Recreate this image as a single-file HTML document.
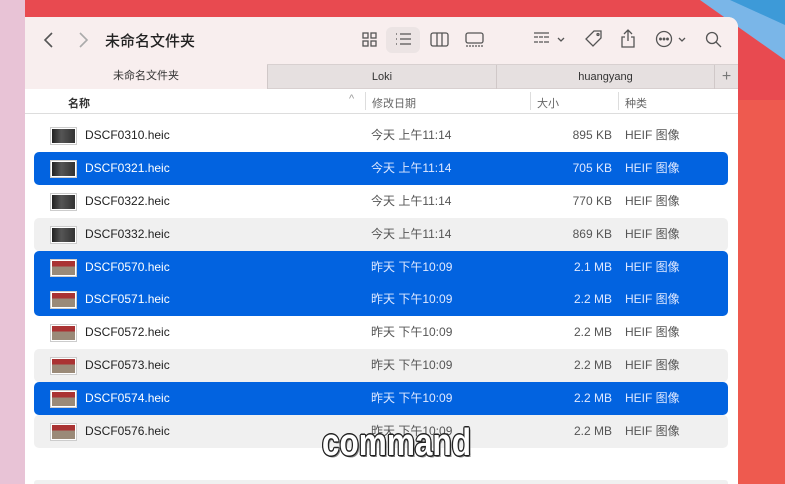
<!DOCTYPE html>
<html><head><meta charset="utf-8"><style>
*{margin:0;padding:0;box-sizing:border-box}
html,body{width:785px;height:484px;overflow:hidden}
body{position:relative;background:#e84a50;font-family:"Liberation Sans","Noto Sans CJK SC",sans-serif;}
.abs{position:absolute}
.win{left:25px;top:17px;width:713px;height:467px;background:#fff;border-top-right-radius:10px;overflow:hidden}
.tb{left:0;top:0;width:713px;height:47px;background:#f8eeee}
.tabs{left:0;top:47px;width:713px;height:25px;background:#e6e0e0;border-top:1px solid #d8d0d0;border-bottom:1px solid #d8d0d0}
.tab{position:absolute;top:0;height:24px;font-size:11px;color:#333;text-align:center;line-height:24px}
.ch{left:0;top:72px;width:713px;height:25px;background:#fff;border-bottom:1px solid #ddd;font-size:11px;color:#666}
.row{position:absolute;left:9px;width:694px;height:33px;font-size:12px;color:#222;line-height:33px}
.g{background:#f0f0f0;border-radius:5px}
.s{background:#0263e0;color:#fff;border-radius:5px}
.s .d,.s .z,.s .k{color:#dfe8ff}
.row span{position:absolute}
.n{left:51px}
.d{left:337px;color:#555}
.z{right:116px;color:#555}
.k{left:591px;color:#555}
.th{position:absolute;left:16px;top:8px;width:27px;height:18px;border:1px solid #ccc;background:#fff;padding:1px}
.th i{display:block;width:100%;height:100%;background:linear-gradient(#a33 0 40%,#9a8a78 40%)}
.dk i{background:linear-gradient(90deg,#222,#555 40%,#333)}
.ico{position:absolute;stroke:#555;fill:none;stroke-width:1.3}
</style></head><body>
<div class="abs" style="left:0;top:0;width:25px;height:484px;background:#e8c3d6"></div>
<svg class="abs" style="left:690px;top:0" width="95" height="484"><polygon points="10,0 95,0 95,60" fill="#7ab6e8"/><polygon points="40,0 95,0 95,25" fill="#3d9ad8"/><rect x="48" y="100" width="47" height="384" fill="#ee5a4f"/></svg>
<div class="abs win">
 <div class="abs tb">
  <svg class="ico" style="left:18px;top:14px" width="12" height="18"><path d="M9 2 L2 9 L9 16" stroke-width="1.6"/></svg>
  <svg class="ico" style="left:52px;top:14px" width="12" height="18"><path d="M3 2 L10 9 L3 16" stroke="#aaa" stroke-width="1.6"/></svg>
  <div class="abs" style="left:80px;top:13px;font-size:15px;color:#222;font-weight:500">未命名文件夹</div>
  <svg class="ico" style="left:337px;top:15px" width="16" height="16"><rect x="1" y="1" width="5" height="5"/><rect x="9" y="1" width="5" height="5"/><rect x="1" y="9" width="5" height="5"/><rect x="9" y="9" width="5" height="5"/></svg>
  <div class="abs" style="left:361px;top:10px;width:34px;height:26px;background:#ece4e4;border-radius:6px"></div>
  <svg class="ico" style="left:370px;top:15px" width="18" height="14"><path d="M1 2h1M5 2h11M1 7h1M5 7h11M1 12h1M5 12h11"/></svg>
  <svg class="ico" style="left:405px;top:15px" width="20" height="16"><rect x="1" y="1" width="17" height="13" rx="2"/><path d="M7 1v13M12 1v13"/></svg>
  <svg class="ico" style="left:440px;top:15px" width="20" height="16"><rect x="1" y="1" width="17" height="10" rx="2"/><path d="M1 14h17" stroke-dasharray="2 1"/></svg>
  <svg class="ico" style="left:508px;top:14px" width="32" height="16"><path d="M1 2h15M1 6h4M6 6h4M11 6h5M1 11h4M6 11h4M11 11h5" /><path d="M25 7l3 3 3-3"/></svg>
  <svg class="ico" style="left:559px;top:12px" width="20" height="20"><path d="M10 2h7v7l-8 8-7-7z"/><circle cx="14" cy="5.5" r="1"/></svg>
  <svg class="ico" style="left:595px;top:11px" width="16" height="20"><path d="M8 2v11M4 6l4-4 4 4M5 9H2v10h12V9h-3"/></svg>
  <svg class="ico" style="left:630px;top:13px" width="36" height="18"><circle cx="9" cy="9" r="7.5"/><circle cx="5.5" cy="9" r=".8" fill="#555"/><circle cx="9" cy="9" r=".8" fill="#555"/><circle cx="12.5" cy="9" r=".8" fill="#555"/><path d="M24 8l3 3 3-3"/></svg>
  <svg class="ico" style="left:680px;top:14px" width="18" height="18"><circle cx="7" cy="7" r="5.5"/><path d="M11 11l5 5"/></svg>
 </div>
 <div class="abs tabs">
  <div class="tab" style="left:0;width:242px;background:#f8eeee;height:25px;top:-1px">未命名文件夹</div>
  <div class="tab" style="left:242px;width:229px;border-left:1px solid #d0c8c8">Loki</div>
  <div class="tab" style="left:471px;width:218px;border-left:1px solid #d0c8c8">huangyang</div>
  <div class="tab" style="left:689px;width:24px;border-left:1px solid #d0c8c8;font-size:16px;color:#777">+</div>
 </div>
 <div class="abs ch">
  <span class="abs" style="left:43px;top:6px;color:#333;font-weight:bold">名称</span>
  <span class="abs" style="left:324px;top:4px;color:#999">^</span>
  <span class="abs" style="left:340px;top:3px;width:1px;height:18px;background:#ddd"></span>
  <span class="abs" style="left:347px;top:6px">修改日期</span>
  <span class="abs" style="left:505px;top:3px;width:1px;height:18px;background:#ddd"></span>
  <span class="abs" style="left:512px;top:6px">大小</span>
  <span class="abs" style="left:593px;top:3px;width:1px;height:18px;background:#ddd"></span>
  <span class="abs" style="left:600px;top:6px">种类</span>
 </div>
</div>
<div class="abs" style="left:25px;top:0;width:713px;height:484px;overflow:hidden">
<div class="row" style="top:119px"><div class="th dk"><i></i></div><span class="n">DSCF0310.heic</span><span class="d">今天 上午11:14</span><span class="z">895 KB</span><span class="k">HEIF 图像</span></div>
<div class="row s" style="top:152px"><div class="th dk"><i></i></div><span class="n">DSCF0321.heic</span><span class="d">今天 上午11:14</span><span class="z">705 KB</span><span class="k">HEIF 图像</span></div>
<div class="row" style="top:185px"><div class="th dk"><i></i></div><span class="n">DSCF0322.heic</span><span class="d">今天 上午11:14</span><span class="z">770 KB</span><span class="k">HEIF 图像</span></div>
<div class="row g" style="top:218px"><div class="th dk"><i></i></div><span class="n">DSCF0332.heic</span><span class="d">今天 上午11:14</span><span class="z">869 KB</span><span class="k">HEIF 图像</span></div>
<div class="row s" style="top:251px;height:65px"></div>
<div class="row" style="top:251px;color:#fff"><div class="th"><i></i></div><span class="n">DSCF0570.heic</span><span class="d" style="color:#dfe8ff">昨天 下午10:09</span><span class="z" style="color:#dfe8ff">2.1 MB</span><span class="k" style="color:#dfe8ff">HEIF 图像</span></div>
<div class="row" style="top:283px;color:#fff"><div class="th"><i></i></div><span class="n">DSCF0571.heic</span><span class="d" style="color:#dfe8ff">昨天 下午10:09</span><span class="z" style="color:#dfe8ff">2.2 MB</span><span class="k" style="color:#dfe8ff">HEIF 图像</span></div>
<div class="row" style="top:316px"><div class="th"><i></i></div><span class="n">DSCF0572.heic</span><span class="d">昨天 下午10:09</span><span class="z">2.2 MB</span><span class="k">HEIF 图像</span></div>
<div class="row g" style="top:349px"><div class="th"><i></i></div><span class="n">DSCF0573.heic</span><span class="d">昨天 下午10:09</span><span class="z">2.2 MB</span><span class="k">HEIF 图像</span></div>
<div class="row s" style="top:382px"><div class="th"><i></i></div><span class="n">DSCF0574.heic</span><span class="d">昨天 下午10:09</span><span class="z">2.2 MB</span><span class="k">HEIF 图像</span></div>
<div class="row g" style="top:415px"><div class="th"><i></i></div><span class="n">DSCF0576.heic</span><span class="d">昨天 下午10:09</span><span class="z">2.2 MB</span><span class="k">HEIF 图像</span></div>
<div class="row g" style="top:480px;height:4px;border-radius:3px 3px 0 0"></div>
</div>
<div class="abs" style="left:322px;top:421px;font-size:38px;line-height:44px;font-weight:bold;color:#fff;font-family:'Liberation Sans Narrow','Liberation Sans',sans-serif;transform:scaleX(0.83);transform-origin:left;text-shadow:-1.5px 0 #222,1.5px 0 #222,0 -1.5px #222,0 1.5px #222,-1px -1px #222,1px 1px #222,-1px 1px #222,1px -1px #222,2px 2px #888">command</div>
</body></html>
